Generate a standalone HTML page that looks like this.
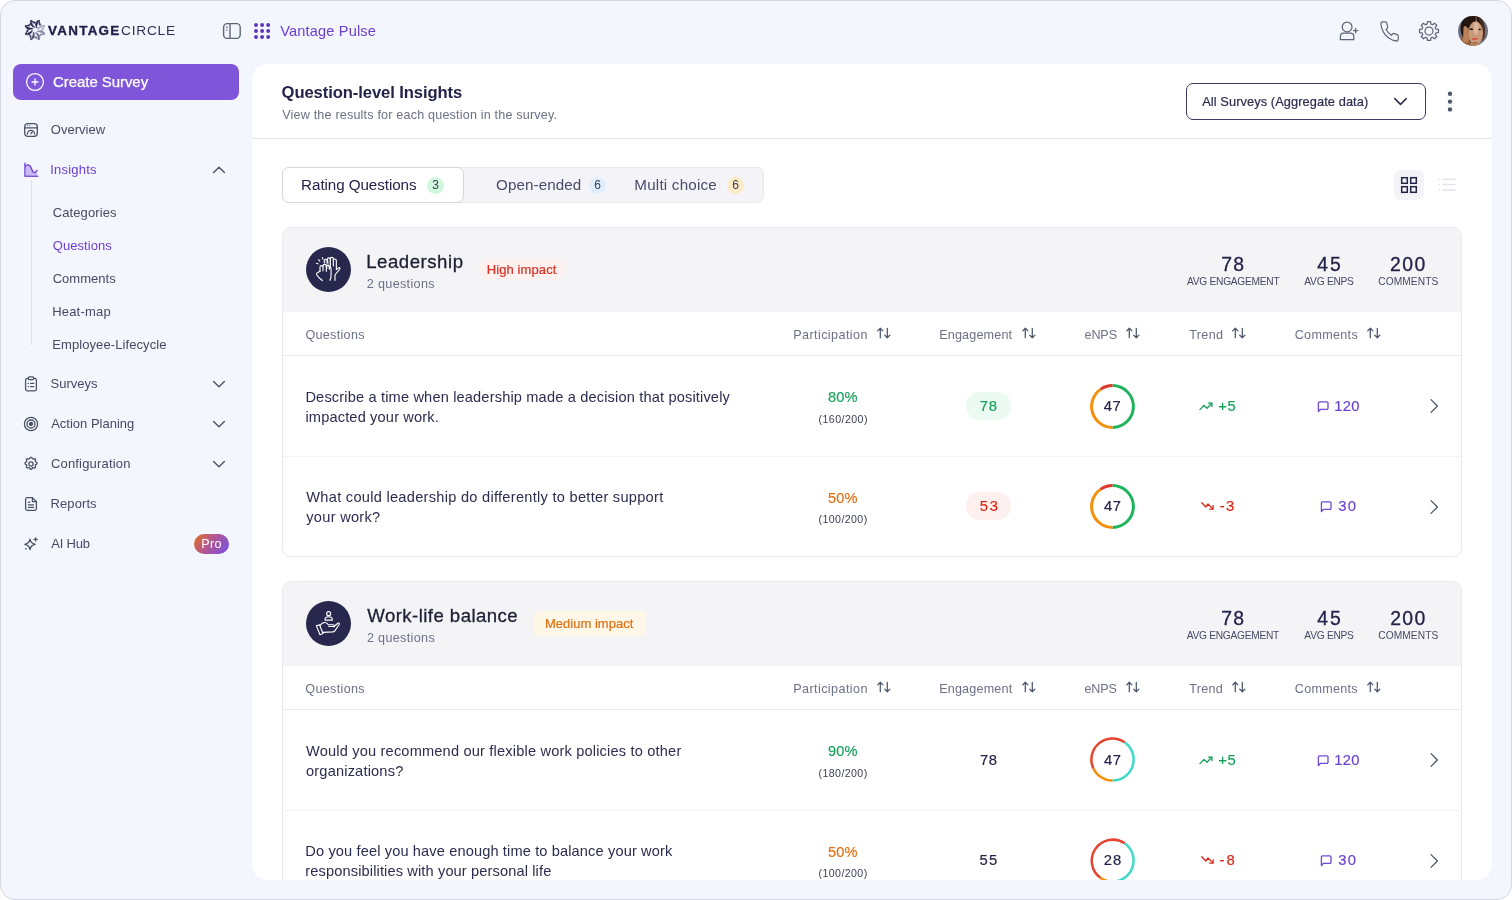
<!DOCTYPE html>
<html lang="en">
<head>
<meta charset="utf-8">
<title>Vantage Pulse - Question-level Insights</title>
<style>
*{box-sizing:border-box;margin:0;padding:0}
html,body{width:1512px;height:900px;overflow:hidden;background:#fff;font-family:"Liberation Sans",Arial,sans-serif;color:#1d2939}
.abs{position:absolute}
#frame{position:absolute;left:0;top:0;width:1512px;height:900px;background:#f4f6fd;border:1px solid #d3d7e3;border-radius:15px;overflow:hidden}
#app{position:absolute;left:-1px;top:-1px;width:1512px;height:900px;will-change:transform}
.t{position:absolute;white-space:nowrap;line-height:1}
/* sidebar */
.nav{position:absolute;left:51px;font-size:13px;color:#454b63;white-space:nowrap;line-height:16px}
.sub{position:absolute;left:53px;margin-top:1px;font-size:13px;color:#454b63;white-space:nowrap;line-height:16px}
.pur{color:#6b3fd1}
.ico{position:absolute;fill:none;stroke:#4a5365;stroke-width:1.3;stroke-linecap:round;stroke-linejoin:round}
#panel{position:absolute;left:252px;top:64px;width:1240px;height:816px;background:#fff;border-radius:16px;overflow:hidden}
#pin{position:absolute;left:-252px;top:-64px;width:1512px;height:900px}
.card{position:absolute;left:282px;width:1180px;border:1px solid #e7e8ef;border-radius:9px;background:#fff;overflow:hidden}
.chead{position:absolute;left:0;top:0;width:100%;height:85px;background:#f4f4f7}

.h1{font-size:16.6px;font-weight:700;color:#23234a;line-height:20px}
.mut{color:#6b7186}
.tab{font-size:15.2px;line-height:18px;color:#2b2d4f}
.bdg{position:absolute;width:17px;height:17px;border-radius:50%;font-size:12px;line-height:17px;text-align:center;color:#3b4058}
.ct{font-size:18.6px;line-height:22px;color:#1d1f33;font-weight:400;-webkit-text-stroke:0.3px #1d1f33}
.cs{font-size:12.6px;line-height:16px;color:#6b7186}
.sv{font-size:19.4px;line-height:22px;color:#23234a;-webkit-text-stroke:0.3px #23234a;text-align:center}
.sl{margin-top:1px;font-size:10.2px;line-height:12px;color:#454a64;text-align:center;transform:scaleY(1.13);transform-origin:50% 78%}
.th{font-size:12.6px;line-height:16px;color:#6b7186}
.q{position:absolute;left:24px;font-size:14.6px;line-height:20px;color:#2b2d4f;white-space:nowrap}
.pc{font-size:14.6px;line-height:18px;-webkit-text-stroke:0.15px currentColor;text-align:center}
.ps{font-size:10.6px;line-height:12px;color:#3b4058;text-align:center}
.g{color:#13a15a}.o{color:#e46f0e}.r{color:#dc2818}.v{color:#6b42d0}
.num{font-size:14.8px;line-height:18px;-webkit-text-stroke:0.18px currentColor}
.row{position:absolute;left:0;width:100%;height:101px}
.hl{position:absolute;left:0;width:100%;height:1px;background:#e9eaf0}
</style>
</head>
<body>
<div id="frame"><div id="app">

<!-- ===== top bar / logo ===== -->
<div id="logo">
<svg class="abs" style="left:22.65px;top:18.25px" width="24" height="24" viewBox="-12 -12 24 24"><g stroke="#26264d" stroke-width="0.55" stroke-linejoin="round" fill="#26264d" transform="rotate(-22)"><path d="M0,-10.8C-2.900,-8.200 -2.700,-5 0.900,-2.400C-0.500,-5 -0.600,-7.600 0,-10.800Z"/><path d="M0,-10.800C1,-8.800 2,-7.800 3.300,-7.300L1.900,-6.300C1,-7.400 0.300,-8.800 0,-10.800Z"/></g><g stroke="#26264d" stroke-width="0.55" stroke-linejoin="round" fill="#26264d" transform="rotate(23)"><path d="M0,-10.8C-2.900,-8.200 -2.700,-5 0.900,-2.400C-0.500,-5 -0.600,-7.600 0,-10.800Z"/><path d="M0,-10.800C1,-8.800 2,-7.800 3.300,-7.300L1.900,-6.300C1,-7.400 0.300,-8.800 0,-10.800Z"/></g><g stroke="#26264d" stroke-width="0.55" stroke-linejoin="round" fill="#26264d" transform="rotate(-67)"><path d="M0,-10.8C-2.900,-8.200 -2.700,-5 0.900,-2.400C-0.500,-5 -0.600,-7.600 0,-10.800Z"/><path d="M0,-10.800C1,-8.800 2,-7.800 3.300,-7.300L1.900,-6.300C1,-7.400 0.300,-8.800 0,-10.800Z"/></g><g stroke="#26264d" stroke-width="0.55" stroke-linejoin="round" fill="#26264d" transform="rotate(-112)"><path d="M0,-10.8C-2.900,-8.200 -2.700,-5 0.900,-2.400C-0.500,-5 -0.600,-7.600 0,-10.800Z"/><path d="M0,-10.800C1,-8.800 2,-7.800 3.300,-7.300L1.900,-6.300C1,-7.400 0.300,-8.800 0,-10.800Z"/></g><g stroke="#4c4c6e" stroke-width="0.55" stroke-linejoin="round" fill="#4c4c6e" transform="rotate(-157)"><path d="M0,-10.8C-2.900,-8.200 -2.700,-5 0.900,-2.400C-0.500,-5 -0.600,-7.600 0,-10.800Z"/><path d="M0,-10.800C1,-8.800 2,-7.800 3.300,-7.300L1.900,-6.300C1,-7.400 0.300,-8.800 0,-10.800Z"/></g><g stroke="#6a6a88" stroke-width="0.55" stroke-linejoin="round" fill="#6a6a88" transform="rotate(158)"><path d="M0,-10.8C-2.900,-8.200 -2.700,-5 0.900,-2.400C-0.500,-5 -0.600,-7.600 0,-10.800Z"/><path d="M0,-10.800C1,-8.800 2,-7.800 3.300,-7.300L1.900,-6.300C1,-7.400 0.300,-8.800 0,-10.800Z"/></g><g stroke="#8a8aa4" stroke-width="0.55" stroke-linejoin="round" fill="#8a8aa4" transform="rotate(113)"><path d="M0,-10.8C-2.900,-8.200 -2.700,-5 0.900,-2.400C-0.500,-5 -0.600,-7.600 0,-10.800Z"/><path d="M0,-10.800C1,-8.800 2,-7.800 3.300,-7.300L1.900,-6.300C1,-7.400 0.300,-8.800 0,-10.800Z"/></g><g stroke="#a6a6bc" stroke-width="0.55" stroke-linejoin="round" fill="#a6a6bc" transform="rotate(68)"><path d="M0,-10.8C-2.900,-8.200 -2.700,-5 0.900,-2.400C-0.500,-5 -0.600,-7.600 0,-10.800Z"/><path d="M0,-10.800C1,-8.800 2,-7.800 3.300,-7.300L1.900,-6.300C1,-7.400 0.300,-8.800 0,-10.800Z"/></g></svg>
<div class="t" id="lg1" style="left:48px;top:24px;font-size:12.5px;line-height:14px;font-weight:700;color:#1f1f47;-webkit-text-stroke:0.35px #1f1f47;transform:scaleX(1.07);transform-origin:0 0;letter-spacing:1.22px;margin-left:0.1px;">VANTAGE</div>
<div class="t" id="lg2" style="left:121.5px;top:24px;font-size:12.5px;line-height:14px;font-weight:400;color:#2f2f55;transform:scaleX(1.1);transform-origin:0 0;letter-spacing:0.68px;margin-left:-1.0px;">CIRCLE</div>
<svg class="ico" style="left:222px;top:22px;stroke:#5d6676;stroke-width:1.4" width="20" height="18" viewBox="0 0 20 18"><rect x="1.6" y="1.6" width="16.6" height="14.8" rx="3.6"/><path d="M8,1.6V16.4"/><path d="M4.4,5.2h0.8M4.4,8h0.8" stroke-width="1.2"/></svg>
<svg class="abs" style="left:253px;top:22px" width="18" height="18" viewBox="0 0 18 18" fill="#5a34b8"><circle cx="3" cy="3" r="1.95"/><circle cx="9.1" cy="3" r="1.95"/><circle cx="15.2" cy="3" r="1.95"/><circle cx="3" cy="9" r="1.95"/><circle cx="9.1" cy="9" r="1.95"/><circle cx="15.2" cy="9" r="1.95"/><circle cx="3" cy="15" r="1.95"/><circle cx="9.1" cy="15" r="1.95"/><circle cx="15.2" cy="15" r="1.95"/></svg>
<div class="t" id="vp" style="left:280px;top:22px;font-size:14.6px;line-height:18px;color:#6b3fd1;letter-spacing:0.14px;margin-left:0.3px;">Vantage Pulse</div>
</div>

<div id="topright">
<svg class="ico" style="left:1338px;top:20px;stroke:#5d6676;stroke-width:1.25" width="22" height="22" viewBox="0 0 22 22"><circle cx="9.100" cy="6.900" r="4.900"/><path d="M2.400,19.700V16.200Q2.400,13 5.600,13H12.400Q15.800,13 15.800,16.200V19.700Z"/><path d="M17.600,8.400v4.400M15.400,10.600h4.400"/></svg>
<svg class="ico" style="left:1379px;top:19.500px;stroke:#5d6676;stroke-width:1.35" width="21" height="23" viewBox="0 0 24 24" preserveAspectRatio="none"><path d="M22 16.920v3a2 2 0 0 1-2.180 2 19.790 19.790 0 0 1-8.630-3.070 19.500 19.500 0 0 1-6-6 19.790 19.790 0 0 1-3.070-8.670A2 2 0 0 1 4.110 2h3a2 2 0 0 1 2 1.720 12.840 12.840 0 0 0 .7 2.810 2 2 0 0 1-.450 2.110L8.090 9.910a16 16 0 0 0 6 6l1.270-1.270a2 2 0 0 1 2.110-.450 12.840 12.840 0 0 0 2.810.7A2 2 0 0 1 22 16.920z"/></svg>
<svg class="ico" style="left:1417.600px;top:20px;stroke:#5d6676;stroke-width:1.25;stroke-linejoin:round" width="22" height="22" viewBox="0 0 22 22"><path d="M9.05,4.07L9.42,1.53L12.58,1.53L12.95,4.07L14.52,4.72L16.58,3.19L18.81,5.42L17.28,7.48L17.93,9.05L20.47,9.42L20.47,12.58L17.93,12.95L17.28,14.52L18.81,16.58L16.58,18.81L14.52,17.28L12.95,17.93L12.58,20.47L9.42,20.47L9.05,17.93L7.48,17.28L5.42,18.81L3.19,16.58L4.72,14.52L4.07,12.95L1.53,12.58L1.53,9.42L4.07,9.05L4.72,7.48L3.19,5.42L5.42,3.19L7.48,4.72Z"/><circle cx="11" cy="11" r="4"/></svg>
<svg class="abs" style="left:1458px;top:15.800px" width="30" height="30" viewBox="0 0 30 30"><defs><clipPath id="avc"><circle cx="15" cy="15" r="15"/></clipPath></defs><g clip-path="url(#avc)"><rect width="30" height="30" fill="#6e7482"/><ellipse cx="14.500" cy="12.500" rx="12" ry="14.500" fill="#24160f"/><path d="M20,1C26,4 28,12 26.500,22L22,26L23,8Z" fill="#4a2e1f"/><path d="M2,22C5,20 9,21 11,24L14,30H3Z" fill="#9a6340"/><ellipse cx="17.600" cy="17.200" rx="7.400" ry="11.600" fill="#c9997b"/><ellipse cx="18.200" cy="12" rx="2.600" ry="7" fill="#e3bda6" opacity="0.750"/><path d="M5.500,12C6,9.500 8,9.500 8.500,11L10.500,12.500L11.500,24C10,27 7,27 5,25Z" fill="#b9805a"/><path d="M11,30C12,25 22,25 24,30Z" fill="#b5805f"/><path d="M18.200,1V7" stroke="#b98c72" stroke-width="0.700"/><ellipse cx="13.300" cy="13.200" rx="1.900" ry="0.900" fill="#2a1a14"/><ellipse cx="21.600" cy="13.500" rx="1.700" ry="0.800" fill="#3a241a"/><path d="M14.600,22.900h4.400" stroke="#e2332b" stroke-width="1.300" stroke-linecap="round"/><path d="M15.200,26.600h3.400" stroke="#8a5a3e" stroke-width="0.800"/></g></svg>
</div>
<!-- ===== sidebar ===== -->
<div id="sidebar">
<div class="abs" style="left:13px;top:64px;width:226px;height:36px;border-radius:8px;background:#7f56d9"></div>
<svg class="abs" style="left:25px;top:72px;fill:none;stroke:#fff;stroke-width:1.3;stroke-linecap:round" width="20" height="20" viewBox="0 0 20 20"><circle cx="10" cy="10" r="8.4"/><path d="M10,7v6M7,10h6"/></svg>
<div class="t" id="cs" style="left:53px;top:73px;font-size:15px;line-height:18px;color:#fff;-webkit-text-stroke:0.25px #fff;letter-spacing:-0.06px;">Create Survey</div>

<svg class="ico" style="left:23px;top:122px" width="16" height="16" viewBox="0 0 16 16"><rect x="1.7" y="1.7" width="12.6" height="12.6" rx="3"/><path d="M1.700,5.900h12.600"/><path d="M4.400,12a3.600,3.600 0 0 1 7.200,0"/><path d="M8,11.800a1.600,1.600 0 0 1 1.400,-1.600"/><path d="M4.600,3.800h0.200M6.800,3.800h0.200" stroke-width="1.100"/></svg>
<div class="nav" id="n1" style="top:122px;letter-spacing:0.01px;margin-left:-0.2px;">Overview</div>

<svg class="abs" style="left:23px;top:162px" width="16" height="16" viewBox="0 0 16 16"><path d="M2.600,4.200C3.600,2.700 5.400,2.500 6.600,3.500C8.200,4.900 8.600,8 10,9.800C11.200,11.200 12.600,10.800 14,8.400V13.800H2.600Z" fill="#c9b8f1"/><path d="M1.900,1.300V14.300H14.800" fill="none" stroke="#7f56d9" stroke-width="1.500" stroke-linecap="round" stroke-linejoin="round"/><path d="M2.600,4.200C3.600,2.700 5.400,2.500 6.600,3.500C8.200,4.900 8.600,8 10,9.800C11.200,11.200 12.600,10.800 14,8.400" fill="none" stroke="#7445d6" stroke-width="1.400" stroke-linecap="round"/></svg>
<div class="nav pur" id="n2" style="top:162px;letter-spacing:0.20px;margin-left:-0.7px;">Insights</div>
<svg class="ico" style="left:212px;top:163px;stroke:#4a5365;stroke-width:1.4" width="14" height="14" viewBox="0 0 14 14"><path d="M1.6,9.4 7,4.2 12.4,9.4"/></svg>
<div class="abs" style="left:31px;top:180px;width:1px;height:165px;background:#dfe2ea"></div>

<div class="sub" id="s1" style="top:204px;letter-spacing:0.11px;margin-left:-0.3px;">Categories</div>
<div class="sub pur" id="s2" style="top:237px;letter-spacing:0.07px;margin-left:-0.3px;">Questions</div>
<div class="sub" id="s3" style="top:270px;letter-spacing:0.02px;margin-left:-0.3px;">Comments</div>
<div class="sub" id="s4" style="top:303px;letter-spacing:0.19px;margin-left:-0.8px;">Heat-map</div>
<div class="sub" id="s5" style="top:336px;letter-spacing:0.09px;margin-left:-0.8px;">Employee-Lifecycle</div>

<svg class="ico" style="left:23px;top:376px" width="16" height="16" viewBox="0 0 16 16"><rect x="2.6" y="2.4" width="10.8" height="12.4" rx="1.8"/><rect x="5.4" y="0.9" width="5.2" height="2.8" rx="1" fill="#f4f6fd"/><path d="M5.2,7.4h0.2M5.2,10.6h0.2M7.6,7.4h3.2M7.6,10.6h3.2"/></svg>
<div class="nav" id="n3" style="top:376px;letter-spacing:0.01px;margin-left:-0.5px;">Surveys</div>
<svg class="ico" style="left:212px;top:377px;stroke:#4a5365;stroke-width:1.4" width="14" height="14" viewBox="0 0 14 14"><path d="M1.6,4.6 7,9.8 12.4,4.6"/></svg>

<svg class="ico" style="left:23px;top:416px" width="16" height="16" viewBox="0 0 16 16"><circle cx="8" cy="8" r="6.6"/><circle cx="8" cy="8" r="4"/><circle cx="8" cy="8" r="1.5" fill="#4a5365"/></svg>
<div class="nav" id="n4" style="top:416px;margin-left:0.2px;">Action Planing</div>
<svg class="ico" style="left:212px;top:417px;stroke:#4a5365;stroke-width:1.4" width="14" height="14" viewBox="0 0 14 14"><path d="M1.6,4.6 7,9.8 12.4,4.6"/></svg>

<svg class="ico" style="left:23px;top:456px;stroke-width:2" width="16" height="16" viewBox="0 0 24 24"><path d="M10.3,3.2c.4-1.6 2.9-1.6 3.4,0a1.7,1.7 0 0 0 2.6,1.1c1.5-.9 3.3,.8 2.4,2.4a1.7,1.7 0 0 0 1.1,2.6c1.6,.4 1.6,2.9 0,3.4a1.7,1.7 0 0 0 -1.1,2.6c.9,1.5 -.8,3.3 -2.4,2.4a1.7,1.7 0 0 0 -2.6,1.1c-.4,1.6 -2.9,1.6 -3.4,0a1.7,1.7 0 0 0 -2.6,-1.1c-1.5,.9 -3.3,-.8 -2.4,-2.4a1.7,1.7 0 0 0 -1.1,-2.6c-1.6,-.4 -1.6,-2.9 0,-3.4a1.7,1.7 0 0 0 1.1,-2.6c-.9,-1.5 .8,-3.3 2.4,-2.4a1.7,1.7 0 0 0 2.6,-1.1z"/><circle cx="12" cy="12" r="3.2"/></svg>
<div class="nav" id="n5" style="top:456px;letter-spacing:0.18px;margin-left:-0.1px;">Configuration</div>
<svg class="ico" style="left:212px;top:457px;stroke:#4a5365;stroke-width:1.4" width="14" height="14" viewBox="0 0 14 14"><path d="M1.6,4.6 7,9.8 12.4,4.6"/></svg>

<svg class="ico" style="left:23px;top:496px" width="16" height="16" viewBox="0 0 16 16"><path d="M9.4,1.6H4.4a1.8,1.8 0 0 0 -1.8,1.8v9.2a1.8,1.8 0 0 0 1.8,1.8h7.2a1.8,1.8 0 0 0 1.8,-1.8V5.6z"/><path d="M9.4,1.6v4h4"/><path d="M5.4,6.2h1.4M5.4,8.8h5.2M5.4,11.4h5.2"/></svg>
<div class="nav" id="n6" style="top:496px;letter-spacing:0.10px;margin-left:-0.5px;">Reports</div>

<svg class="ico" style="left:23px;top:536px" width="16" height="16" viewBox="0 0 16 16"><path d="M7,3.2C7.6,6.6 8.8,7.8 12.2,8.4C8.8,9 7.6,10.2 7,13.6C6.4,10.2 5.2,9 1.8,8.4C5.2,7.8 6.400,6.600 7,3.200Z"/><path d="M12.600,1.800v3.200M11,3.400h3.200"/><path d="M2.800,12.800h0.200" stroke-width="1.6"/></svg>
<div class="nav" id="n7" style="top:536px;letter-spacing:-0.21px;margin-left:0.2px;">AI Hub</div>
<div class="abs" style="left:194px;top:534px;width:35px;height:20px;border-radius:10px;background:linear-gradient(125deg,#e2701f 0%,#b2559a 48%,#7a52da 92%)"></div>
<div class="t" id="pro" style="left:201px;top:537px;font-size:12.5px;line-height:14px;color:#fff;letter-spacing:0.35px;margin-left:0.3px;">Pro</div>
</div>

<!-- ===== main panel ===== -->
<div id="panel"><div id="pin">

<div class="t h1" id="h1" style="left:282px;top:83px;letter-spacing:-0.09px;margin-left:-0.4px;">Question-level Insights</div>
<div class="t mut" id="h2" style="left:282px;top:107px;font-size:12.6px;line-height:16px;letter-spacing:0.18px;margin-left:0.2px;">View the results for each question in the survey.</div>
<div class="abs" style="left:1186px;top:83px;width:240px;height:37px;border:1.3px solid #3a3b63;border-radius:7px"></div>
<div class="t" id="sel" style="left:1202px;top:94px;font-size:12.8px;line-height:16px;color:#2b2d4f;-webkit-text-stroke:0.2px #2b2d4f;letter-spacing:0.09px;margin-left:0.2px;">All Surveys (Aggregate data)</div>
<svg class="ico" style="left:1393px;top:94px;stroke:#2b2d4f;stroke-width:1.5" width="15" height="15" viewBox="0 0 15 15"><path d="M1.8,4.600 7.500,10.400 13.200,4.600"/></svg>
<svg class="abs" style="left:1446px;top:90px" width="8" height="24" viewBox="0 0 8 24" fill="#4d566b"><circle cx="4" cy="3.700" r="2.200"/><circle cx="4" cy="11.600" r="2.200"/><circle cx="4" cy="19.400" r="2.200"/></svg>
<div class="abs" style="left:252px;top:138px;width:1240px;height:1px;background:#e3e5ee"></div>

<!-- tabs -->
<div class="abs" style="left:282px;top:167px;width:482px;height:36px;background:#f4f4f8;border:1px solid #e7e8ef;border-radius:7px"></div>
<div class="abs" style="left:282px;top:167px;width:182px;height:36px;background:#fff;border:1px solid #d3d6e0;border-radius:7px"></div>
<div class="t tab" id="tb1" style="left:302px;top:176px;color:#23234a;letter-spacing:-0.07px;margin-left:-0.9px;">Rating Questions</div>
<div class="bdg" style="left:427px;top:176.500px;background:#d1f7df">3</div>
<div class="t tab" id="tb2" style="left:496px;top:176px;color:#474c68;letter-spacing:0.07px;margin-left:0.1px;">Open-ended</div>
<div class="bdg" style="left:589px;top:176.500px;background:#e0eefc">6</div>
<div class="t tab" id="tb3" style="left:635px;top:176px;color:#474c68;letter-spacing:0.21px;margin-left:-0.7px;">Multi choice</div>
<div class="bdg" style="left:727px;top:176.500px;background:#fdebc8">6</div>
<div class="abs" style="left:1394px;top:170px;width:30px;height:30px;border-radius:7px;background:#f4f4f8"></div>
<svg class="ico" style="left:1400px;top:176px;stroke:#23234a;stroke-width:1.5;stroke-linejoin:miter" width="18" height="18" viewBox="0 0 18 18"><rect x="1.700" y="1.700" width="5.600" height="5.600"/><rect x="10.700" y="1.700" width="5.600" height="5.600"/><rect x="1.700" y="10.700" width="5.600" height="5.600"/><rect x="10.700" y="10.700" width="5.600" height="5.600"/></svg>
<svg class="ico" style="left:1438px;top:176px;stroke:#e1e4ec;stroke-width:1.5" width="18" height="18" viewBox="0 0 18 18"><path d="M5,3.200h12M5,8.600h12M5,14h12"/><path d="M1.200,3.200h0.200M1.200,8.600h0.200M1.200,14h0.200"/></svg>
<!--CARDS-->
<div class="card" style="top:227px;height:330px"><div class="abs" style="left:-1px;top:-1px;width:1180px;height:330px">
<div class="chead"></div>
<div class="abs" style="left:24px;top:20px;width:45px;height:45px;border-radius:50%;background:#28284f"></div>
<svg class="abs" style="left:24px;top:20px;fill:none;stroke:#fff;stroke-linecap:round;stroke-linejoin:round" width="45" height="45" viewBox="0 0 45 45"><g transform="translate(-6,-7) scale(0.0666667)" stroke-width="17">
<path d="M365,345V312Q365,290 387,290Q410,290 410,312V345"/>
<path d="M410,312V290Q410,268 432,268Q455,268 455,290V400"/>
<path d="M455,290V282Q455,260 477,260Q500,260 500,282V390"/>
<path d="M500,300Q500,285 522,285Q545,285 545,307V445L580,415Q602,405 598,432L525,525V605"/>
<path d="M300,470V405Q300,385 322,385Q345,385 345,405V460"/>
<path d="M345,405V385Q345,365 370,365Q395,365 395,385V470"/>
<path d="M395,400Q395,380 418,380Q440,380 442,402V440"/>
<path d="M442,405Q466,402 466,432V520Q466,570 450,605"/>
<path d="M300,470L268,488Q240,500 252,522L290,570L335,608"/>
<path d="M245,350L275,358M278,295L298,318M335,262L345,292" stroke-width="15"/>
<path d="M385,305H440V430H385Z" fill="#fff" fill-opacity="0.35" stroke="none"/>
</g></svg>
<div class="t ct" id="c1t" style="left:85.4px;top:23.6px;letter-spacing:0.53px;margin-left:-1.2px;">Leadership</div>
<div class="t cs" id="c1s" style="left:85.4px;top:48.6px;letter-spacing:0.33px;margin-left:-0.6px;">2 questions</div>
<div class="abs" style="left:197px;top:32px;width:86px;height:21px;border-radius:10.5px;background:#fef2f0"></div>
<div class="t " id="c1b" style="left:205.6px;top:34.7px;font-size:13px;line-height:16px;color:#dc2f22;-webkit-text-stroke:0.2px #dc2f22;letter-spacing:0.10px;margin-left:-0.9px;">High impact</div>
<div class="t sv" id="c1v0" style="left:890.8px;width:120px;top:26.3px;letter-spacing:1.18px;margin-left:0.5px;">78</div>
<div class="t sl" id="c1l0" style="left:890.8px;width:120px;top:48.3px;letter-spacing:-0.26px;margin-left:0.4px;">AVG ENGAGEMENT</div>
<div class="t sv" id="c1v1" style="left:986.9px;width:120px;top:26.3px;letter-spacing:1.97px;margin-left:1.2px;">45</div>
<div class="t sl" id="c1l1" style="left:986.9px;width:120px;top:48.3px;letter-spacing:-0.25px;margin-left:0.1px;">AVG ENPS</div>
<div class="t sv" id="c1v2" style="left:1065.8px;width:120px;top:26.3px;letter-spacing:1.40px;margin-left:0.5px;">200</div>
<div class="t sl" id="c1l2" style="left:1065.8px;width:120px;top:48.3px;letter-spacing:0.09px;margin-left:0.5px;">COMMENTS</div>
<div class="t th" id="c1h0" style="left:24.0px;top:99.6px;letter-spacing:0.30px;margin-left:-0.6px;">Questions</div>
<div class="t th" id="c1h1" style="left:512.3px;top:99.6px;letter-spacing:0.41px;margin-left:-1.1px;">Participation</div>
<svg class="ico" style="left:593.7px;top:99.2px;stroke:#4a566b;stroke-width:1.25" width="16" height="14" viewBox="0 0 16 14"><path d="M4.300,11.700V2.300M1.700,4.900 4.300,2.200 6.900,4.900"/><path d="M11.300,2.300V11.700M8.700,9.100 11.300,11.800 13.900,9.100"/></svg>
<div class="t th" id="c1h2" style="left:658.3px;top:99.6px;letter-spacing:0.16px;margin-left:-1.1px;">Engagement</div>
<svg class="ico" style="left:738.9px;top:99.2px;stroke:#4a566b;stroke-width:1.25" width="16" height="14" viewBox="0 0 16 14"><path d="M4.300,11.700V2.300M1.700,4.900 4.300,2.200 6.900,4.900"/><path d="M11.300,2.300V11.700M8.700,9.100 11.300,11.800 13.900,9.100"/></svg>
<div class="t th" id="c1h3" style="left:803.0px;top:99.6px;letter-spacing:-0.12px;margin-left:-0.5px;">eNPS</div>
<svg class="ico" style="left:842.7px;top:99.2px;stroke:#4a566b;stroke-width:1.25" width="16" height="14" viewBox="0 0 16 14"><path d="M4.300,11.700V2.300M1.700,4.900 4.300,2.200 6.900,4.900"/><path d="M11.300,2.300V11.700M8.700,9.100 11.300,11.800 13.900,9.100"/></svg>
<div class="t th" id="c1h4" style="left:907.6px;top:99.6px;letter-spacing:0.31px;margin-left:-0.3px;">Trend</div>
<svg class="ico" style="left:948.7px;top:99.2px;stroke:#4a566b;stroke-width:1.25" width="16" height="14" viewBox="0 0 16 14"><path d="M4.300,11.700V2.300M1.700,4.900 4.300,2.200 6.900,4.900"/><path d="M11.300,2.300V11.700M8.700,9.100 11.300,11.800 13.900,9.100"/></svg>
<div class="t th" id="c1h5" style="left:1013.4px;top:99.6px;letter-spacing:0.30px;margin-left:-0.7px;">Comments</div>
<svg class="ico" style="left:1083.8px;top:99.2px;stroke:#4a566b;stroke-width:1.25" width="16" height="14" viewBox="0 0 16 14"><path d="M4.300,11.700V2.300M1.700,4.900 4.300,2.200 6.900,4.900"/><path d="M11.300,2.300V11.700M8.700,9.100 11.300,11.800 13.900,9.100"/></svg>
<div class="hl" style="top:128px"></div>
<div class="q" id="c1q0" style="top:159.9px;letter-spacing:0.16px;margin-left:-0.6px;">Describe a time when leadership made a decision that positively<br>impacted your work.</div>
<div class="t pc g" id="c1p0" style="left:500.8px;width:120px;top:161.2px;letter-spacing:0.20px;margin-left:0.1px;">80%</div>
<div class="t ps" id="c1ps0" style="left:501.0px;width:120px;top:185.6px;letter-spacing:0.45px;margin-left:0.2px;">(160/200)</div>
<div class="abs" style="left:684px;top:165.0px;width:45px;height:28px;border-radius:14px;background:#ebfbf1"></div>
<div class="t num g" id="c1e0" style="left:676.3px;width:60px;top:170.1px;text-align:center;letter-spacing:0.71px;margin-left:0.4px;">78</div>
<svg class="abs" style="left:808.3px;top:156.7px" width="45" height="45" viewBox="0 0 45 45"><path d="M22.50,1.60A20.9,20.9 0 0 1 22.50,43.40" stroke="#1fb45c" stroke-width="3" fill="none"/><path d="M22.50,43.40A20.9,20.9 0 0 1 10.51,5.38" stroke="#f5900c" stroke-width="3" fill="none"/><path d="M10.51,5.38A20.9,20.9 0 0 1 22.50,1.60" stroke="#dc3a2c" stroke-width="3" fill="none"/></svg>
<div class="t num" id="c1n0" style="left:810.6px;width:40px;top:170.1px;text-align:center;color:#23234a;letter-spacing:0.62px;margin-left:-0.1px;">47</div>
<svg class="ico" style="left:916.5px;top:173.0px;stroke:#13a15a;stroke-width:1.3" width="15" height="12" viewBox="0 0 15 12"><path d="M0.900,9.600 5,5.400 8,8.300 12.700,3.300"/><path d="M9.400,3.100h3.500v3.500"/></svg>
<div class="t num g" id="c1t0" style="left:936.7px;top:170.1px;letter-spacing:0.69px;margin-left:-0.5px;">+5</div>
<svg class="ico" style="left:1034.6px;top:173.5px;stroke:#7048d4;stroke-width:1.3" width="12" height="12" viewBox="0 0 12 12"><path d="M2.600,0.900h7.200a1.200,1.200 0 0 1 1.200,1.200v5a1.200,1.200 0 0 1 -1.200,1.200h-6.200l-2.200,2.200v-8.400a1.200,1.200 0 0 1 1.200,-1.200z"/></svg>
<div class="t num v" id="c1c0" style="left:1053.3px;top:170.1px;letter-spacing:0.25px;margin-left:-1.1px;">120</div>
<svg class="ico" style="left:1147px;top:171.2px;stroke:#4d566b;stroke-width:1.3" width="10" height="16" viewBox="0 0 10 16"><path d="M2,1.600 8.400,8 2,14.400"/></svg>
<div class="hl" style="top:229px;background:#f1f2f6"></div>
<div class="q" id="c1q1" style="top:260.2px;letter-spacing:0.28px;margin-left:0.3px;">What could leadership do differently to better support<br>your work?</div>
<div class="t pc o" id="c1p1" style="left:500.8px;width:120px;top:261.5px;letter-spacing:0.18px;">50%</div>
<div class="t ps" id="c1ps1" style="left:501.0px;width:120px;top:285.9px;letter-spacing:0.41px;margin-left:0.1px;">(100/200)</div>
<div class="abs" style="left:684px;top:265.3px;width:45px;height:28px;border-radius:14px;background:#fdf0ef"></div>
<div class="t num r" id="c1e1" style="left:676.3px;width:60px;top:270.4px;text-align:center;letter-spacing:1.71px;margin-left:1.5px;">53</div>
<svg class="abs" style="left:808.3px;top:257.0px" width="45" height="45" viewBox="0 0 45 45"><path d="M22.50,1.60A20.9,20.9 0 0 1 22.50,43.40" stroke="#1fb45c" stroke-width="3" fill="none"/><path d="M22.50,43.40A20.9,20.9 0 0 1 10.51,5.38" stroke="#f5900c" stroke-width="3" fill="none"/><path d="M10.51,5.38A20.9,20.9 0 0 1 22.50,1.60" stroke="#dc3a2c" stroke-width="3" fill="none"/></svg>
<div class="t num" id="c1n1" style="left:810.6px;width:40px;top:270.4px;text-align:center;color:#23234a;letter-spacing:0.54px;margin-left:0.1px;">47</div>
<svg class="ico" style="left:917.5px;top:273.3px;stroke:#dc2818;stroke-width:1.3" width="15" height="12" viewBox="0 0 15 12"><path d="M1.800,2.800 5.800,7 8,4 12.900,8.900"/><path d="M9.600,9.100h3.500v-3.500"/></svg>
<div class="t num r" id="c1t1" style="left:937.5px;top:270.4px;letter-spacing:1.28px;margin-left:0.3px;">-3</div>
<svg class="ico" style="left:1037.7px;top:273.8px;stroke:#7048d4;stroke-width:1.3" width="12" height="12" viewBox="0 0 12 12"><path d="M2.600,0.900h7.200a1.200,1.200 0 0 1 1.200,1.200v5a1.200,1.200 0 0 1 -1.200,1.200h-6.200l-2.200,2.200v-8.400a1.200,1.200 0 0 1 1.200,-1.200z"/></svg>
<div class="t num v" id="c1c1" style="left:1056.0px;top:270.4px;letter-spacing:1.39px;margin-left:0.2px;">30</div>
<svg class="ico" style="left:1147px;top:271.5px;stroke:#4d566b;stroke-width:1.3" width="10" height="16" viewBox="0 0 10 16"><path d="M2,1.600 8.400,8 2,14.400"/></svg>
</div></div>
<div class="card" style="top:581px;height:330px"><div class="abs" style="left:-1px;top:-1px;width:1180px;height:330px">
<div class="chead"></div>
<div class="abs" style="left:24px;top:20px;width:45px;height:45px;border-radius:50%;background:#28284f"></div>
<svg class="abs" style="left:24px;top:20px;fill:none;stroke:#fff;stroke-linecap:round;stroke-linejoin:round" width="45" height="45" viewBox="0 0 45 45"><g transform="translate(-6,-7) scale(0.0666667)" stroke-width="17">
<circle cx="430" cy="295" r="30"/>
<path d="M376,392V378Q376,342 430,342Q484,342 484,378V392Z"/>
<path d="M246,478L292,462L345,592L300,610Z"/>
<path d="M305,470Q330,425 375,428Q405,432 425,462H495Q518,464 512,488H430"/>
<path d="M505,492L568,438Q598,425 588,458L522,552Q512,566 490,568L348,575"/>
</g></svg>
<div class="t ct" id="c2t" style="left:85.4px;top:23.6px;letter-spacing:0.44px;margin-left:-0.1px;">Work-life balance</div>
<div class="t cs" id="c2s" style="left:85.4px;top:48.6px;letter-spacing:0.34px;margin-left:-0.5px;">2 questions</div>
<div class="abs" style="left:252px;top:30px;width:112px;height:25px;border-radius:4px;background:#fef6e6"></div>
<div class="t " id="c2b" style="left:260.6px;top:34.7px;font-size:13px;line-height:16px;color:#e0700f;-webkit-text-stroke:0.2px #e0700f;letter-spacing:0.02px;margin-left:2.3px;">Medium impact</div>
<div class="t sv" id="c2v0" style="left:890.8px;width:120px;top:26.3px;letter-spacing:1.22px;margin-left:0.5px;">78</div>
<div class="t sl" id="c2l0" style="left:890.8px;width:120px;top:48.3px;letter-spacing:-0.26px;margin-left:0.1px;">AVG ENGAGEMENT</div>
<div class="t sv" id="c2v1" style="left:986.9px;width:120px;top:26.3px;letter-spacing:1.85px;margin-left:1.1px;">45</div>
<div class="t sl" id="c2l1" style="left:986.9px;width:120px;top:48.3px;letter-spacing:-0.26px;margin-left:0.1px;">AVG ENPS</div>
<div class="t sv" id="c2v2" style="left:1065.8px;width:120px;top:26.3px;letter-spacing:1.38px;margin-left:0.6px;">200</div>
<div class="t sl" id="c2l2" style="left:1065.8px;width:120px;top:48.3px;letter-spacing:0.09px;margin-left:0.5px;">COMMENTS</div>
<div class="t th" id="c2h0" style="left:24.0px;top:99.6px;letter-spacing:0.32px;margin-left:-0.7px;">Questions</div>
<div class="t th" id="c2h1" style="left:512.3px;top:99.6px;letter-spacing:0.41px;margin-left:-1.1px;">Participation</div>
<svg class="ico" style="left:593.7px;top:99.2px;stroke:#4a566b;stroke-width:1.25" width="16" height="14" viewBox="0 0 16 14"><path d="M4.300,11.700V2.300M1.700,4.900 4.300,2.200 6.900,4.900"/><path d="M11.300,2.300V11.700M8.700,9.100 11.300,11.800 13.900,9.100"/></svg>
<div class="t th" id="c2h2" style="left:658.3px;top:99.6px;letter-spacing:0.17px;margin-left:-1.1px;">Engagement</div>
<svg class="ico" style="left:738.9px;top:99.2px;stroke:#4a566b;stroke-width:1.25" width="16" height="14" viewBox="0 0 16 14"><path d="M4.300,11.700V2.300M1.700,4.900 4.300,2.200 6.900,4.900"/><path d="M11.300,2.300V11.700M8.700,9.100 11.300,11.800 13.900,9.100"/></svg>
<div class="t th" id="c2h3" style="left:803.0px;top:99.6px;letter-spacing:-0.14px;margin-left:-0.5px;">eNPS</div>
<svg class="ico" style="left:842.7px;top:99.2px;stroke:#4a566b;stroke-width:1.25" width="16" height="14" viewBox="0 0 16 14"><path d="M4.300,11.700V2.300M1.700,4.900 4.300,2.200 6.900,4.900"/><path d="M11.300,2.300V11.700M8.700,9.100 11.300,11.800 13.900,9.100"/></svg>
<div class="t th" id="c2h4" style="left:907.6px;top:99.6px;letter-spacing:0.25px;margin-left:-0.3px;">Trend</div>
<svg class="ico" style="left:948.7px;top:99.2px;stroke:#4a566b;stroke-width:1.25" width="16" height="14" viewBox="0 0 16 14"><path d="M4.300,11.700V2.300M1.700,4.900 4.300,2.200 6.900,4.900"/><path d="M11.300,2.300V11.700M8.700,9.100 11.300,11.800 13.900,9.100"/></svg>
<div class="t th" id="c2h5" style="left:1013.4px;top:99.6px;letter-spacing:0.28px;margin-left:-0.6px;">Comments</div>
<svg class="ico" style="left:1083.8px;top:99.2px;stroke:#4a566b;stroke-width:1.25" width="16" height="14" viewBox="0 0 16 14"><path d="M4.300,11.700V2.300M1.700,4.900 4.300,2.200 6.900,4.900"/><path d="M11.300,2.300V11.700M8.700,9.100 11.300,11.800 13.900,9.100"/></svg>
<div class="hl" style="top:128px"></div>
<div class="q" id="c2q0" style="top:159.9px;letter-spacing:0.18px;">Would you recommend our flexible work policies to other<br>organizations?</div>
<div class="t pc g" id="c2p0" style="left:500.8px;width:120px;top:161.2px;letter-spacing:0.20px;margin-left:0.1px;">90%</div>
<div class="t ps" id="c2ps0" style="left:501.0px;width:120px;top:185.6px;letter-spacing:0.41px;margin-left:0.1px;">(180/200)</div>
<div class="t num " id="c2e0" style="left:676.3px;width:60px;top:170.1px;text-align:center;color:#23234a;letter-spacing:0.61px;margin-left:0.5px;">78</div>
<svg class="abs" style="left:808.0px;top:156.2px" width="45" height="45" viewBox="0 0 45 45"><path d="M34.60,5.22A21.1,21.1 0 0 1 22.50,43.60" stroke="#3edcc8" stroke-width="2.5" fill="none"/><path d="M22.50,43.60A21.1,21.1 0 0 1 3.38,31.42" stroke="#f5900c" stroke-width="2.5" fill="none"/><path d="M3.38,31.42A21.1,21.1 0 0 1 34.60,5.22" stroke="#e8432f" stroke-width="2.5" fill="none"/></svg>
<div class="t num" id="c2n0" style="left:810.6px;width:40px;top:170.1px;text-align:center;color:#23234a;letter-spacing:0.54px;margin-left:0.1px;">47</div>
<svg class="ico" style="left:916.5px;top:173.0px;stroke:#13a15a;stroke-width:1.3" width="15" height="12" viewBox="0 0 15 12"><path d="M0.900,9.600 5,5.400 8,8.300 12.700,3.300"/><path d="M9.400,3.100h3.500v3.500"/></svg>
<div class="t num g" id="c2t0" style="left:936.7px;top:170.1px;letter-spacing:0.63px;margin-left:-0.4px;">+5</div>
<svg class="ico" style="left:1034.6px;top:173.5px;stroke:#7048d4;stroke-width:1.3" width="12" height="12" viewBox="0 0 12 12"><path d="M2.600,0.900h7.200a1.200,1.200 0 0 1 1.200,1.200v5a1.200,1.200 0 0 1 -1.200,1.200h-6.200l-2.200,2.200v-8.400a1.200,1.200 0 0 1 1.200,-1.200z"/></svg>
<div class="t num v" id="c2c0" style="left:1053.3px;top:170.1px;letter-spacing:0.27px;margin-left:-1.0px;">120</div>
<svg class="ico" style="left:1147px;top:171.20000000000005px;stroke:#4d566b;stroke-width:1.3" width="10" height="16" viewBox="0 0 10 16"><path d="M2,1.600 8.400,8 2,14.400"/></svg>
<div class="hl" style="top:229px;background:#f1f2f6"></div>
<div class="q" id="c2q1" style="top:260.2px;letter-spacing:0.13px;margin-left:-0.7px;">Do you feel you have enough time to balance your work<br>responsibilities with your personal life</div>
<div class="t pc o" id="c2p1" style="left:500.8px;width:120px;top:261.5px;letter-spacing:0.18px;">50%</div>
<div class="t ps" id="c2ps1" style="left:501.0px;width:120px;top:285.9px;letter-spacing:0.41px;margin-left:0.1px;">(100/200)</div>
<div class="t num " id="c2e1" style="left:676.3px;width:60px;top:270.4px;text-align:center;color:#23234a;letter-spacing:1.07px;margin-left:0.6px;">55</div>
<svg class="abs" style="left:808.0px;top:256.5px" width="45" height="45" viewBox="0 0 45 45"><path d="M34.60,5.22A21.1,21.1 0 0 1 22.50,43.60" stroke="#3edcc8" stroke-width="2.5" fill="none"/><path d="M22.50,43.60A21.1,21.1 0 0 1 10.40,39.78" stroke="#f5900c" stroke-width="2.5" fill="none"/><path d="M10.40,39.78A21.1,21.1 0 0 1 34.60,5.22" stroke="#e8432f" stroke-width="2.5" fill="none"/></svg>
<div class="t num" id="c2n1" style="left:810.6px;width:40px;top:270.4px;text-align:center;color:#23234a;letter-spacing:1.01px;margin-left:0.3px;">28</div>
<svg class="ico" style="left:917.5px;top:273.29999999999995px;stroke:#dc2818;stroke-width:1.3" width="15" height="12" viewBox="0 0 15 12"><path d="M1.800,2.800 5.800,7 8,4 12.900,8.900"/><path d="M9.600,9.100h3.500v-3.500"/></svg>
<div class="t num r" id="c2t1" style="left:937.5px;top:270.4px;letter-spacing:2.02px;margin-left:0.1px;">-8</div>
<svg class="ico" style="left:1037.7px;top:273.79999999999995px;stroke:#7048d4;stroke-width:1.3" width="12" height="12" viewBox="0 0 12 12"><path d="M2.600,0.900h7.200a1.200,1.200 0 0 1 1.200,1.200v5a1.200,1.200 0 0 1 -1.200,1.200h-6.200l-2.200,2.200v-8.400a1.200,1.200 0 0 1 1.200,-1.200z"/></svg>
<div class="t num v" id="c2c1" style="left:1056.0px;top:270.4px;letter-spacing:1.39px;margin-left:0.2px;">30</div>
<svg class="ico" style="left:1147px;top:271.5px;stroke:#4d566b;stroke-width:1.3" width="10" height="16" viewBox="0 0 10 16"><path d="M2,1.600 8.400,8 2,14.400"/></svg>
</div></div>
<!--/CARDS-->

</div></div>

</div></div>
</body>
</html>
